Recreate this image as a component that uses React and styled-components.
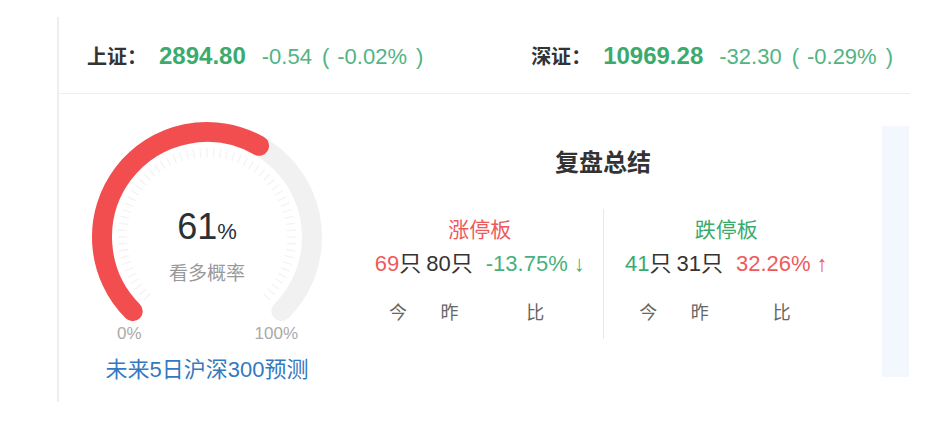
import React from 'react';
import styled, { createGlobalStyle } from 'styled-components';

const GlobalStyle = createGlobalStyle`
  html, body {
    margin: 0;
    padding: 0;
    background: #ffffff;
  }
  body {
    font-family: "Liberation Sans", "Noto Sans CJK SC", sans-serif;
    color: #333333;
  }
`;

const RED = '#ee5a5c';
const GREEN = '#3aab6d';

// gauge geometry (viewBox units == px)
const CX = 120;
const CY = 120;
const R = 105;
const START = -135;
const SWEEP = 270;

const polar = (deg, r) => {
  const a = (deg * Math.PI) / 180;
  return [CX + r * Math.sin(a), CY - r * Math.cos(a)];
};

const arcPath = (from, to, r) => {
  const [x1, y1] = polar(from, r);
  const [x2, y2] = polar(to, r);
  const large = to - from > 180 ? 1 : 0;
  return `M ${x1} ${y1} A ${r} ${r} 0 ${large} 1 ${x2} ${y2}`;
};

const Gauge = ({ value }) => {
  const ticks = [];
  const count = 60;
  for (let i = 0; i <= count; i += 1) {
    const deg = START + (i * SWEEP) / count;
    const [x1, y1] = polar(deg, 80);
    const [x2, y2] = polar(deg, 89);
    ticks.push(<line key={i} x1={x1} y1={y1} x2={x2} y2={y2} stroke="#f3f3f3" strokeWidth="1.3" />);
  }
  const end = START + (SWEEP * value) / 100;
  return (
    <svg width="240" height="240" viewBox="0 0 240 240">
      {ticks}
      <path d={arcPath(START, START + SWEEP, R)} fill="none" stroke="#f1f1f1" strokeWidth="20" strokeLinecap="round" />
      <path d={arcPath(START, end, R)} fill="none" stroke="#f24d4f" strokeWidth="20" strokeLinecap="round" />
    </svg>
  );
};

const quotes = [
  { name: '上证', price: '2894.80', change: '-0.54', pct: '-0.02%' },
  { name: '深证', price: '10969.28', change: '-32.30', pct: '-0.29%' },
];

const boards = [
  {
    title: '涨停板',
    tone: RED,
    today: { n: '69', tone: RED },
    yesterday: '80',
    ratio: { text: '-13.75%', arrow: '↓', tone: '#48b07c' },
  },
  {
    title: '跌停板',
    tone: GREEN,
    today: { n: '41', tone: GREEN },
    yesterday: '31',
    ratio: { text: '32.26%', arrow: '↑', tone: RED },
  },
];

export default function App() {
  return (
    <>
      <GlobalStyle />
      <Card>
        <Header>
          {quotes.map((q) => (
            <Quote key={q.name}>
              <QuoteName>{q.name}：</QuoteName>
              <Price>{q.price}</Price>
              <Change>{q.change}</Change>
              <Change $gap>
                (<PctText>{q.pct}</PctText>)
              </Change>
            </Quote>
          ))}
        </Header>
        <Body>
          <GaugeCol>
            <GaugeWrap>
              <Gauge value={61} />
              <GaugeCenter>
                <BigNum>
                  61<Pct>%</Pct>
                </BigNum>
                <GaugeLabel>看多概率</GaugeLabel>
              </GaugeCenter>
              <Scale>
                <span>0%</span>
                <span>100%</span>
              </Scale>
            </GaugeWrap>
            <Caption>未来5日沪深300预测</Caption>
          </GaugeCol>
          <Summary>
            <Title>复盘总结</Title>
            <Halves>
              {boards.map((b, i) => (
                <Half key={b.title} $divider={i > 0}>
                  <BoardTitle $tone={b.tone}>{b.title}</BoardTitle>
                  <Stats>
                    <Stat>
                      <Value>
                        <Tone $tone={b.today.tone}>{b.today.n}</Tone>只
                      </Value>
                      <StatLabel>今</StatLabel>
                    </Stat>
                    <Stat $ml={5}>
                      <Value>{b.yesterday}只</Value>
                      <StatLabel>昨</StatLabel>
                    </Stat>
                    <Stat $ml={13}>
                      <Value>
                        <Tone $tone={b.ratio.tone}>
                          {b.ratio.text}
                          <Arrow>{b.ratio.arrow}</Arrow>
                        </Tone>
                      </Value>
                      <StatLabel>比</StatLabel>
                    </Stat>
                  </Stats>
                </Half>
              ))}
            </Halves>
          </Summary>
          <SidePanel />
        </Body>
      </Card>
    </>
  );
}

/**
 * Styles
 */
const Card = styled.div`
  margin: 17px 0 0 57px;
  width: 851px;
  border-left: 2px solid #eeeeee;
  overflow: hidden;
`;

const Header = styled.div`
  height: 76px;
  display: flex;
  align-items: center;
  justify-content: space-between;
  padding: 0 17px 0 28px;
  border-bottom: 1px solid #eeeeee;
`;

const Quote = styled.div`
  display: flex;
  align-items: baseline;
  white-space: nowrap;
`;

const QuoteName = styled.span`
  font-size: 20px;
  font-weight: bold;
  color: #333333;
`;

const Price = styled.span`
  margin-left: 12px;
  font-size: 24px;
  font-weight: bold;
  color: ${GREEN};
`;

const Change = styled.span`
  margin-left: ${(p) => (p.$gap ? '10px' : '16px')};
  font-size: 22px;
  color: #52b383;
`;

const PctText = styled.span`
  margin: 0 9px 0 8px;
`;

const Body = styled.div`
  display: flex;
  align-items: flex-start;
  padding: 23px 0 20px 28px;
`;

const GaugeCol = styled.div`
  width: 240px;
  display: flex;
  flex-direction: column;
  align-items: center;
`;

const GaugeWrap = styled.div`
  position: relative;
  width: 240px;
  height: 241px;
`;

const GaugeCenter = styled.div`
  position: absolute;
  top: 90px;
  left: 0;
  right: 0;
  display: flex;
  flex-direction: column;
  align-items: center;
`;

const BigNum = styled.div`
  font-size: 36px;
  line-height: 40px;
  color: #2b2f36;
`;

const Pct = styled.span`
  font-size: 22px;
`;

const GaugeLabel = styled.div`
  margin-top: 10px;
  font-size: 19px;
  line-height: 24px;
  color: #999999;
`;

const Scale = styled.div`
  position: absolute;
  top: 207px;
  left: 30px;
  right: 29px;
  display: flex;
  justify-content: space-between;
  font-size: 17px;
  line-height: 20px;
  color: #aaaaaa;
`;

const Caption = styled.div`
  font-size: 22px;
  line-height: 24px;
  color: #3479c0;
  white-space: nowrap;
`;

const Summary = styled.div`
  width: 492px;
  margin: 30px 0 0 30px;
  display: flex;
  flex-direction: column;
  align-items: center;
`;

const Title = styled.div`
  font-size: 24px;
  line-height: 32px;
  font-weight: bold;
  color: #333333;
`;

const Halves = styled.div`
  width: 100%;
  margin-top: 30px;
  display: flex;
`;

const Half = styled.div`
  flex: 1;
  height: 130px;
  padding-top: 7px;
  box-sizing: border-box;
  display: flex;
  flex-direction: column;
  align-items: center;
  border-left: ${(p) => (p.$divider ? '1px solid #e8e8e8' : 'none')};
`;

const BoardTitle = styled.div`
  font-size: 21px;
  line-height: 28px;
  color: ${(p) => p.$tone};
`;

const Stats = styled.div`
  margin-top: 5px;
  display: flex;
  align-items: flex-start;
`;

const Stat = styled.div`
  margin-left: ${(p) => p.$ml || 0}px;
  display: flex;
  flex-direction: column;
  align-items: center;
`;

const Value = styled.div`
  font-size: 22px;
  line-height: 30px;
  color: #333333;
  white-space: nowrap;
`;

const Tone = styled.span`
  color: ${(p) => p.$tone};
`;

const Arrow = styled.span`
  margin-left: 6px;
`;

const StatLabel = styled.div`
  margin-top: 22px;
  font-size: 18px;
  line-height: 24px;
  color: #666666;
`;

const SidePanel = styled.div`
  flex: none;
  width: 27px;
  height: 251px;
  margin: 9px 0 0 33px;
  background: #f3f8fe;
`;
